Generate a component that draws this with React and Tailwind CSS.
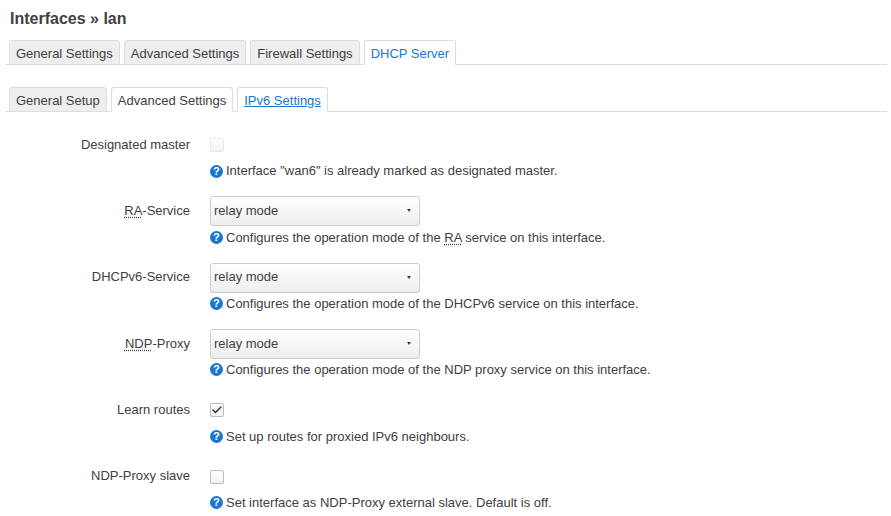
import { Check } from 'lucide-react';

function HelpIcon() {
  return (
    <svg viewBox="0 0 14 14" className="w-[13px] h-[13px] shrink-0 mr-[3px]">
      <circle cx="7" cy="7" r="7" fill="#1976d2" />
      <text x="7" y="11.2" textAnchor="middle" fontSize="12" fontWeight="700" fill="#fff" fontFamily="Liberation Sans, sans-serif">?</text>
    </svg>
  );
}

function Abbr({ children }) {
  return <span className="underline decoration-dotted underline-offset-[2px]">{children}</span>;
}

function Row({ label, help, children }) {
  return (
    <div className="flex mb-[17.33px]">
      <div className="w-[190px] h-[28.6px] flex items-center justify-end text-[#404040] whitespace-nowrap">{label}</div>
      <div className="ml-5">
        <div className="h-[30px] flex items-center">{children}</div>
        <div className="mt-[3px] h-4 flex items-center text-[#404040] whitespace-pre">
          <HelpIcon />
          <span>{help}</span>
        </div>
      </div>
    </div>
  );
}

function Select() {
  return (
    <div className="w-[210px] h-[30px] border border-[#ccc] rounded-[3px] bg-gradient-to-b from-white to-[#eeeeee] flex items-center justify-between pl-[3px] pr-[8px] pb-px text-[#404040]">
      relay mode
      <span className="w-0 h-0 border-x-[2.5px] border-x-transparent border-t-[3px] border-t-[#404040]" />
    </div>
  );
}

function Checkbox({ checked, disabled }) {
  return (
    <div className={`w-[14px] h-[14px] rounded-[2px] border flex items-center justify-center ${disabled ? 'border-[#e8e8e8]' : 'border-[#bbb]'} bg-gradient-to-b from-white to-[#f2f2f2]`}>
      {checked && <Check className="w-3 h-3 text-[#333]" strokeWidth={3} />}
    </div>
  );
}

function Tab({ children, active, link }) {
  return (
    <div className={`h-[25px] -mb-px px-[6px] pt-[2px] flex items-center border border-[#ddd] rounded-t-[3px] ${active ? 'bg-white border-b-white' : 'bg-[#eeeeee]'} ${link ? 'text-[#1976d2]' : 'text-[#404040]'}`}>
      {children}
    </div>
  );
}

export default function App() {
  return (
    <div className="w-[891px] h-[516px] overflow-hidden bg-white font-['Liberation_Sans',Arial,sans-serif] text-[13px]">
      <h2 className="pt-[10px] pl-[10px] h-[40px] text-[16px] leading-[18px] font-bold text-[#404040]">Interfaces » lan</h2>
      <div className="ml-[5px] mr-[4px] pl-[4px] flex gap-1 border-b border-[#ddd] h-[25px]">
        <Tab>General Settings</Tab>
        <Tab>Advanced Settings</Tab>
        <Tab>Firewall Settings</Tab>
        <Tab active link>DHCP Server</Tab>
      </div>
      <div className="mt-[22px] ml-[5px] mr-[4px] pl-[4px] flex gap-1 border-b border-[#ddd] h-[25px]">
        <Tab>General Setup</Tab>
        <Tab active>Advanced Settings</Tab>
        <Tab active link><span className="underline">IPv6 Settings</span></Tab>
      </div>
      <div className="mt-[18px]">
        <Row label="Designated master" help={'Interface "wan6" is already marked as designated master.'}>
          <Checkbox disabled />
        </Row>
        <Row label={<><Abbr>RA</Abbr>-Service</>} help={<>Configures the operation mode of the <Abbr>RA</Abbr> service on this interface.</>}>
          <Select />
        </Row>
        <Row label="DHCPv6-Service" help="Configures the operation mode of the DHCPv6 service on this interface.">
          <Select />
        </Row>
        <Row label={<><Abbr>NDP</Abbr>-Proxy</>} help="Configures the operation mode of the NDP proxy service on this interface.">
          <Select />
        </Row>
        <Row label="Learn routes" help="Set up routes for proxied IPv6 neighbours.">
          <Checkbox checked />
        </Row>
        <Row label="NDP-Proxy slave" help="Set interface as NDP-Proxy external slave. Default is off.">
          <Checkbox />
        </Row>
      </div>
    </div>
  );
}
